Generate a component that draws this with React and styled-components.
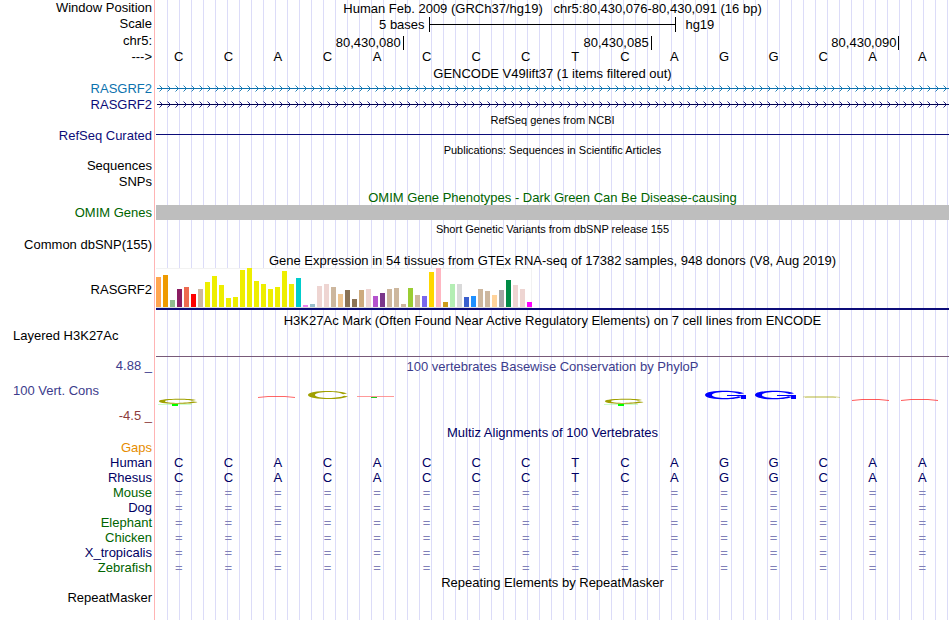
import React from "react";
import styled, { createGlobalStyle } from "styled-components";

const GlobalStyle = createGlobalStyle`
  body {
    margin: 0;
    background-color: #fff;
    font-family: "Liberation Sans", Arial, Helvetica, sans-serif;
    font-size: 13px;
    color: #000;
  }
`;

const Browser = styled.main`
  min-height: 100vh;
  box-sizing: border-box;
  padding-right: 1px;
  background:
    linear-gradient(#ffb4b4, #ffb4b4) 154px 0 / 1px 100% no-repeat,
    repeating-linear-gradient(to right, #dcdcf8 0 1px, transparent 1px 12px)
      right 0 top 0 / calc(100% - 167px) 100% no-repeat;
`;

const Row = styled.div`
  display: grid;
  grid-template-columns: 154px minmax(0, 1fr);
  height: ${(props) => props.$height || 16}px;
`;

const Label = styled.div`
  display: flex;
  align-items: ${(props) => props.$align || "center"};
  justify-content: ${(props) => (props.$left ? "flex-start" : "flex-end")};
  padding: 0 2px 2px 13px;
  line-height: 15px;
  white-space: pre;
  color: ${(props) => props.$color || "#000"};
`;

const Track = styled.div`
  padding-left: 2px;
`;

const Title = styled.div`
  display: flex;
  align-items: center;
  justify-content: center;
  height: 100%;
  line-height: 15px;
  white-space: pre;
  font-size: ${(props) => (props.$small ? 11 : 13)}px;
  color: ${(props) => props.$color || "#000"};
`;

const ScaleBar = styled.div`
  display: grid;
  grid-template-columns: 1fr 31.25% 1fr;
  column-gap: 4px;
  align-items: center;
  height: 100%;
`;

const ScaleText = styled.span`
  text-align: ${(props) => props.$side};
  padding-left: ${(props) => (props.$side === "left" ? 5 : 0)}px;
`;

const ScaleLine = styled.span`
  height: 15px;
  box-sizing: border-box;
  border: solid #000;
  border-width: 0 1px;
  background: linear-gradient(#000, #000) 0 7px / 100% 1px no-repeat;
`;

const Ruler = styled.div`
  display: grid;
  grid-template-columns: 5fr 5fr 5fr 1fr;
  align-items: end;
  height: 100%;
`;

const Tick = styled.span`
  height: 14px;
  line-height: 13px;
  padding-right: 2px;
  border-right: 1px solid #000;
  text-align: right;
`;

const Bases = styled.div`
  display: grid;
  grid-template-columns: repeat(16, minmax(0, 1fr));
  align-items: center;
  padding: 0 2px 2px 0;
  text-align: center;
  line-height: 15px;
  color: ${(props) => props.$color || "#000"};
`;

const Marks = styled(Bases)`
  align-items: end;
  padding-bottom: 0;
`;

const Mark = styled.svg`
  display: block;
  width: 49px;
  height: 20px;
`;

const Gene = styled.svg`
  display: block;
  width: 100%;
  height: 16px;
`;

const Rule = styled.div`
  height: ${(props) => props.$offset}px;
  border-bottom: 1px solid ${(props) => props.$color};
`;

const OmimBar = styled.div`
  height: 15px;
  background-color: #bebebe;
`;

const Expression = styled.div`
  height: 40px;
  border-bottom: 2px solid #0c0c78;
`;

const Bars = styled.div`
  display: flex;
  align-items: flex-end;
  gap: 2px;
  width: max-content;
  height: 39px;
  background-color: #fff;
  box-shadow: inset 0 1px #f2f2f2, inset -1px 0 #f2f2f2;
  border-bottom: 1px solid #dcdcdc;
`;

const Bar = styled.span`
  width: 5px;
`;

const NAVY = "#0c0c78";
const GREEN = "#006400";
const CONS = "#000064";

const SEQUENCE = "CCACACCCTCAGGCAA".split("");

// [color, height] for each GTEx tissue
const TISSUES = [
  ["#ffa54f", 30], ["#ee9a00", 32], ["#8fbc8f", 7], ["#8b1c62", 18],
  ["#ee6a50", 20], ["#ff0000", 13], ["#cdb79e", 18], ["#eeee00", 25],
  ["#eeee00", 31], ["#eeee00", 22], ["#eeee00", 9], ["#eeee00", 10],
  ["#eeee00", 37], ["#eeee00", 39], ["#eeee00", 26], ["#eeee00", 23],
  ["#eeee00", 18], ["#eeee00", 20], ["#eeee00", 36], ["#eeee00", 23],
  ["#00cdcd", 29], ["#ee82ee", 2], ["#9ac0cd", 3], ["#eed5d2", 21],
  ["#eed5d2", 23], ["#cdb79e", 20], ["#eec591", 13], ["#8b7355", 17],
  ["#8b7355", 8], ["#cdaa7d", 17], ["#eed5d2", 18], ["#b452cd", 11],
  ["#7a378b", 14], ["#cdb79e", 18], ["#cdb79e", 19], ["#cdb79e", 3],
  ["#9acd32", 19], ["#cdb79e", 12], ["#7a67ee", 11], ["#ffd700", 35],
  ["#ffb6c1", 39], ["#cd9b1d", 5], ["#b4eeb4", 23], ["#d9d9d9", 23],
  ["#3a5fcd", 10], ["#1e90ff", 11], ["#cdb79e", 18], ["#cdb79e", 16],
  ["#ffd39b", 12], ["#a6a6a6", 17], ["#008b45", 27], ["#eed5d2", 22],
  ["#eed5d2", 18], ["#ff00ff", 5],
];

// conservation mark drawn at each position, null where the score is near zero
const MARKS = [
  "lowRing", null, "arch", "ring", "flat", null, null, null,
  null, "lowRing", null, "hook", "hook", "faint", "lowArch", "lowArch",
];

const SPECIES = [
  ["Mouse", GREEN],
  ["Dog", CONS],
  ["Elephant", GREEN],
  ["Chicken", GREEN],
  ["X_tropicalis", CONS],
  ["Zebrafish", GREEN],
];

const TitleRow = ({ height, small, color, label, labelColor, children }) => (
  <Row $height={height}>
    <Label $color={labelColor}>{label}</Label>
    <Track>
      <Title $small={small} $color={color}>{children}</Title>
    </Track>
  </Row>
);

const GeneRow = ({ id, name, color, line }) => (
  <Row>
    <Label $color={color}>{name}</Label>
    <Track>
      <Gene>
        <defs>
          <pattern id={id} width="8" height="16" patternUnits="userSpaceOnUse">
            <path
              d="M3.5 4.5L6.5 7.5L3.5 10.5"
              fill="none"
              stroke={color}
              strokeWidth="0.9"
            />
          </pattern>
        </defs>
        <rect x="1" y="7" width="100%" height="1" fill={line} />
        <rect width="100%" height="16" fill={`url(#${id})`} />
      </Gene>
    </Track>
  </Row>
);

const BaseRow = ({ name, color, label, letters, height }) => (
  <Row $height={height}>
    <Label $color={label}>{name}</Label>
    <Bases $color={color}>
      {letters.map((letter, i) => (
        <span key={i}>{letter}</span>
      ))}
    </Bases>
  </Row>
);

const ConservationMark = ({ kind }) => (
  <Mark viewBox="0 0 49 20">
    {kind === "ring" && (
      <path
        fill="#a0a000"
        d="M44 5.5C38 2 5 1.8 5 7C5 12.2 39 12.2 45 8.5L41 7.8C36 10.8 12 10.8 12 7C12 3.2 35 3.2 40 6.2Z"
      />
    )}
    {kind === "lowRing" && (
      <>
        <path
          fill="#a0a000"
          d="M42 12C37 10.2 5 10.2 5 13.2C5 16.6 39 16.6 43.5 14L39 13.6C34 15.4 11 15.4 11 13.2C11 11.4 34 11.4 38 12.8Z"
        />
        <path fill="#80ff80" d="M4 16h34v1H4z" opacity="0.4" />
        <path fill="#00ff00" d="M18 16h6v2h-6z" />
      </>
    )}
    {kind === "hook" && (
      <>
        <path
          fill="#0000ff"
          d="M45 5.5C39 1.8 6 1.6 6 7C6 12.4 39 12.4 43 8.8L39 8.2C34 10.8 13 10.8 13 7C13 3.2 35 3.2 40 6Z"
        />
        <path fill="#0000ff" d="M28 7h19v4h-5v-3H28z" />
      </>
    )}
    {kind === "arch" && (
      <path d="M5 9.5L15 8.5H32L42 9.5" fill="none" stroke="#ff4040" opacity="0.8" />
    )}
    {kind === "lowArch" && (
      <path d="M4 12.5L14 11.5H31L41 12.5" fill="none" stroke="#ff3030" opacity="0.8" />
    )}
    {kind === "flat" && (
      <>
        <path d="M5 8.5H42" stroke="#ff8080" opacity="0.8" />
        <path d="M19 9.5H25" stroke="#20c820" />
      </>
    )}
    {kind === "faint" && (
      <path
        d="M5 9L9 8.5H35L42 9.5M7 9.5H38"
        fill="none"
        stroke="#a0a000"
        opacity="0.4"
      />
    )}
  </Mark>
);

const App = () => {
  return (
    <Browser>
      <GlobalStyle />
      <TitleRow label="Window Position">
        {"Human Feb. 2009 (GRCh37/hg19)   chr5:80,430,076-80,430,091 (16 bp)"}
      </TitleRow>
      <Row $height={17}>
        <Label>Scale</Label>
        <Track>
          <ScaleBar>
            <ScaleText $side="right">5 bases</ScaleText>
            <ScaleLine />
            <ScaleText $side="left">hg19</ScaleText>
          </ScaleBar>
        </Track>
      </Row>
      <Row>
        <Label>chr5:</Label>
        <Track>
          <Ruler>
            <Tick>80,430,080</Tick>
            <Tick>80,430,085</Tick>
            <Tick>80,430,090</Tick>
          </Ruler>
        </Track>
      </Row>
      <BaseRow name="--->" letters={SEQUENCE} />

      <TitleRow>GENCODE V49lift37 (1 items filtered out)</TitleRow>
      <GeneRow id="coding" name="RASGRF2" color="#0c72ae" line="#0c72ae" />
      <GeneRow id="basic" name="RASGRF2" color={NAVY} line="#00004c" />

      <TitleRow height={15} small>RefSeq genes from NCBI</TitleRow>
      <Row $height={15}>
        <Label $color={NAVY}>RefSeq Curated</Label>
        <Track>
          <Rule $offset={6} $color={NAVY} />
        </Track>
      </Row>

      <TitleRow height={15} small>
        Publications: Sequences in Scientific Articles
      </TitleRow>
      <TitleRow label="Sequences" />
      <TitleRow label="SNPs" />

      <TitleRow height={15} color={GREEN}>
        OMIM Gene Phenotypes - Dark Green Can Be Disease-causing
      </TitleRow>
      <Row>
        <Label $color={GREEN}>OMIM Genes</Label>
        <Track>
          <OmimBar />
        </Track>
      </Row>

      <TitleRow small>Short Genetic Variants from dbSNP release 155</TitleRow>
      <TitleRow height={15} label="Common dbSNP(155)" />

      <TitleRow>
        Gene Expression in 54 tissues from GTEx RNA-seq of 17382 samples, 948
        donors (V8, Aug 2019)
      </TitleRow>
      <Row $height={44}>
        <Label>RASGRF2</Label>
        <Track>
          <Expression>
            <Bars>
              {TISSUES.map(([color, height], i) => (
                <Bar key={i} style={{ height, backgroundColor: color }} />
              ))}
            </Bars>
          </Expression>
        </Track>
      </Row>

      <TitleRow>
        H3K27Ac Mark (Often Found Near Active Regulatory Elements) on 7 cell
        lines from ENCODE
      </TitleRow>
      <Row $height={30}>
        <Label $left $align="flex-start">Layered H3K27Ac</Label>
        <Track>
          <Rule $offset={28} $color="#785a78" />
        </Track>
      </Row>

      <TitleRow color="#3c3c8c" label="4.88 _" labelColor="#3c3c8c">
        100 vertebrates Basewise Conservation by PhyloP
      </TitleRow>
      <Row $height={34}>
        <Label $left $color="#3c3c8c">100 Vert. Cons</Label>
        <Marks>
          {MARKS.map((kind, i) => (
            <ConservationMark key={i} kind={kind} />
          ))}
        </Marks>
      </Row>
      <TitleRow label="-4.5 _" labelColor="#8c3c3c" />

      <TitleRow color={CONS}>Multiz Alignments of 100 Vertebrates</TitleRow>
      <TitleRow height={15} label="Gaps" labelColor="#e68c00" />
      <BaseRow height={15} name="Human" label={CONS} color={CONS} letters={SEQUENCE} />
      <BaseRow height={15} name="Rhesus" label={CONS} color={CONS} letters={SEQUENCE} />
      {SPECIES.map(([name, color]) => (
        <BaseRow
          key={name}
          height={15}
          name={name}
          label={color}
          color="#8080b8"
          letters={SEQUENCE.map(() => "=")}
        />
      ))}

      <TitleRow height={15}>Repeating Elements by RepeatMasker</TitleRow>
      <TitleRow height={15} label="RepeatMasker" />
    </Browser>
  );
};

export default App;
